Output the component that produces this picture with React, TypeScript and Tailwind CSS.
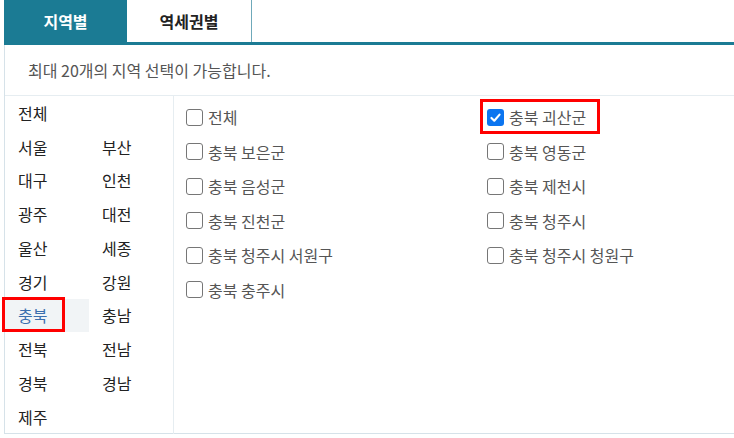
const regions = [
  "전체", "",
  "서울", "부산",
  "대구", "인천",
  "광주", "대전",
  "울산", "세종",
  "경기", "강원",
  "충북", "충남",
  "전북", "전남",
  "경북", "경남",
  "제주",
];

const districts = [
  { name: "전체", checked: false },
  { name: "충북 괴산군", checked: true },
  { name: "충북 보은군", checked: false },
  { name: "충북 영동군", checked: false },
  { name: "충북 음성군", checked: false },
  { name: "충북 제천시", checked: false },
  { name: "충북 진천군", checked: false },
  { name: "충북 청주시", checked: false },
  { name: "충북 청주시 서원구", checked: false },
  { name: "충북 청주시 청원구", checked: false },
  { name: "충북 충주시", checked: false },
];

const Box = ({ checked }: { checked: boolean }) =>
  checked ? (
    <span className="w-[17px] h-[17px] rounded-[3px] bg-[#0b75f0] flex items-center justify-center shrink-0">
      <svg width="13" height="13" viewBox="0 0 16 16" fill="none">
        <path d="M3 8.5 L6.5 12 L13 4.5" stroke="white" strokeWidth="2.6" strokeLinecap="round" strokeLinejoin="round" />
      </svg>
    </span>
  ) : (
    <span className="w-[17px] h-[17px] rounded-[3px] border border-[#767676] bg-white shrink-0" />
  );

const App = () => {
  return (
    <div className="w-[734px] h-[438px] bg-white overflow-hidden font-['Noto_Sans_CJK_KR',sans-serif]">
      <div className="pl-[4px]">
        {/* tabs */}
        <div className="flex h-[45px] border-b-[3px] border-[#1b7b94]">
          <div className="w-[123px] h-[42px] bg-[#1b7b94] text-white font-bold text-[16px] flex items-center justify-center">
            지역별
          </div>
          <div className="w-[125px] h-[42px] border-r border-[#6fa9ba] text-[#222] font-bold text-[16px] flex items-center justify-center">
            역세권별
          </div>
        </div>

        <div className="h-[389px] border-l border-b border-[#d6e2e9] flex flex-col">
          <div className="h-[51px] shrink-0 border-b border-[#e6edf1] flex items-center pl-[23px] text-[16px] text-[#555]">
            최대 20개의 지역 선택이 가능합니다.
          </div>

          <div className="flex flex-1">
            <div className="w-[169px] border-r border-[#e6edf1] grid grid-cols-2 content-start">
              {regions.map((r, i) => (
                <div
                  key={i}
                  className={
                    "relative h-[33.75px] flex items-center pl-[13px] text-[16px] " +
                    (r === "충북" ? "bg-[#f1f4f6] text-[#3b6fae]" : "text-[#222]")
                  }
                >
                  {r}
                  {r === "충북" && (
                    <span className="absolute left-[-3px] top-[-1.5px] w-[63px] h-[35px] border-[3px] border-[#ff0000]" />
                  )}
                </div>
              ))}
            </div>

            <div className="flex-1 pl-[12px] pt-[4px] grid grid-cols-[301px_1fr] content-start">
              {districts.map((d) => (
                <div key={d.name} className="relative h-[34.5px] flex items-center gap-[5px] text-[16px] text-[#555]">
                  <Box checked={d.checked} />
                  <span>{d.name}</span>
                  {d.checked && (
                    <span className="absolute left-[-7px] top-[-1px] w-[120px] h-[35px] border-[3px] border-[#ff0000]" />
                  )}
                </div>
              ))}
            </div>
          </div>
        </div>
      </div>
    </div>
  );
};

export default App;
